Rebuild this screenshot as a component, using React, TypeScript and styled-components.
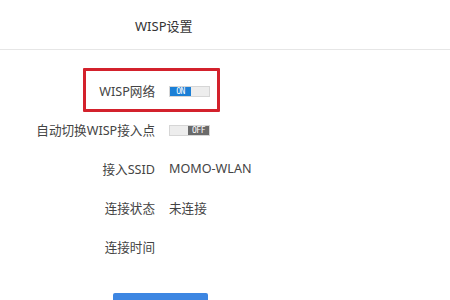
import React from "react";
import styled, { createGlobalStyle } from "styled-components";

const Global = createGlobalStyle`
  html, body { margin: 0; padding: 0; background: #fff; }
  body { font-family: "Noto Sans", "Noto Sans CJK SC", sans-serif; color: #333; }
`;

const Page = styled.div`
  width: 450px;
  display: flex;
  flex-direction: column;
`;

const Header = styled.div`
  height: 50px;
  border-bottom: 1px solid #e6e6e6;
  display: flex;
  align-items: center;
  padding-left: 135px;
  padding-top: 1px;
  box-sizing: border-box;
  font-size: 13px;
  color: #333;
`;

const Form = styled.div`
  display: flex;
  flex-direction: column;
  padding-top: 21px;
`;

const Row = styled.div`
  position: relative;
  height: 39px;
  display: flex;
  align-items: center;
  gap: 14px;
  font-size: 12.6px;
`;

const Label = styled.div`
  width: 155px;
  text-align: right;
  color: #444;
  white-space: nowrap;
`;

const Value = styled.div`
  color: #444;
`;

const Highlight = styled.div`
  position: absolute;
  left: 83px;
  top: -3px;
  width: 137px;
  height: 44px;
  box-sizing: border-box;
  border: 3px solid #d3212c;
  border-radius: 1px;
  pointer-events: none;
`;

const Switch = styled.div<{ $on: boolean }>`
  width: 41px;
  height: 11px;
  display: flex;
  flex-direction: ${(p) => (p.$on ? "row" : "row-reverse")};
  border: 1px solid #d6d6d6;
  box-sizing: border-box;
  background: #ededed;
  margin-top: 1px;
`;

const Knob = styled.div<{ $on: boolean }>`
  width: 21px;
  height: 100%;
  background: ${(p) => (p.$on ? "#1b7fd6" : "#6a6a6a")};
  color: #fff;
  font-family: "DejaVu Sans Mono", "Liberation Mono", monospace;
  font-size: 8px;
  line-height: 9px;
  text-align: center;
  letter-spacing: -0.5px;
`;

const Button = styled.button`
  margin-top: 27px;
  margin-left: 113px;
  width: 95px;
  height: 32px;
  border: none;
  border-radius: 2px;
  background: #3d86e2;
`;

const Toggle = ({ on }: { on: boolean }) => (
  <Switch $on={on}>
    <Knob $on={on}>{on ? "ON" : "OFF"}</Knob>
  </Switch>
);

export default function App() {
  return (
    <Page>
      <Global />
      <Header>WISP设置</Header>
      <Form>
        <Row>
          <Highlight />
          <Label>WISP网络</Label>
          <Toggle on={true} />
        </Row>
        <Row>
          <Label>自动切换WISP接入点</Label>
          <Toggle on={false} />
        </Row>
        <Row>
          <Label>接入SSID</Label>
          <Value>MOMO-WLAN</Value>
        </Row>
        <Row>
          <Label>连接状态</Label>
          <Value>未连接</Value>
        </Row>
        <Row>
          <Label>连接时间</Label>
          <Value></Value>
        </Row>
      </Form>
      <Button aria-label="保存" />
    </Page>
  );
}
